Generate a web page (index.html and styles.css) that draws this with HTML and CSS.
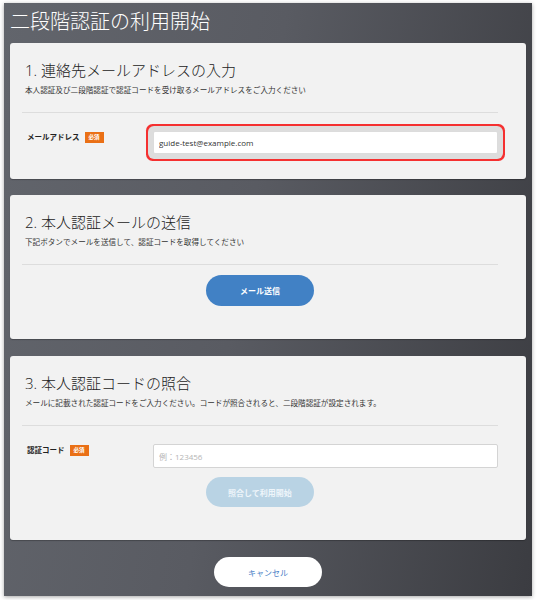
FILE: index.html
```html
<!DOCTYPE html>
<html lang="ja">
<head>
<meta charset="utf-8">
<title>二段階認証の利用開始</title>
<link rel="stylesheet" href="styles.css">
</head>
<body>
<div class="panel">
  <h1 class="title">二段階認証の利用開始</h1>

  <section class="card card-first">
    <h2 class="card-title">1. 連絡先メールアドレスの入力</h2>
    <p class="card-desc">本人認証及び二段階認証で認証コードを受け取るメールアドレスをご入力ください</p>
    <hr class="sep">
    <div class="form-row">
      <div class="label">メールアドレス<span class="badge">必須</span></div>
      <div class="field"><input class="input input-focus" type="text" value="guide-test@example.com"></div>
    </div>
  </section>

  <section class="card">
    <h2 class="card-title">2. 本人認証メールの送信</h2>
    <p class="card-desc">下記ボタンでメールを送信して、認証コードを取得してください</p>
    <hr class="sep">
    <div class="btn-row btn-row-top"><button class="btn btn-primary">メール送信</button></div>
  </section>

  <section class="card">
    <h2 class="card-title">3. 本人認証コードの照合</h2>
    <p class="card-desc">メールに記載された認証コードをご入力ください。コードが照合されると、二段階認証が設定されます。</p>
    <hr class="sep">
    <div class="form-row">
      <div class="label">認証コード<span class="badge">必須</span></div>
      <div class="field"><input class="input" type="text" placeholder="例：123456"></div>
    </div>
    <div class="btn-row"><button class="btn btn-disabled">照合して利用開始</button></div>
  </section>

  <div class="cancel-row"><button class="btn btn-cancel">キャンセル</button></div>
</div>
</body>
</html>
```

FILE: styles.css
```css
* { box-sizing: border-box; }
html, body { margin: 0; padding: 0; background: #ffffff; }
body {
  font-family: "Open Sans", "Noto Sans CJK JP", sans-serif;
  color: #222;
}
.panel {
  margin: 3px 5px 4px 4px;
  width: 528px;
  height: 593px;
  padding: 0 6px 9px 6px;
  background: linear-gradient(100deg, #62656c 0%, #595b62 45%, #3b3c41 100%);
  box-shadow: 0 1px 4px rgba(0,0,0,0.35);
}
.title {
  margin: 0 0 4px 0;
  height: 36px;
  font-size: 20px;
  line-height: 36px;
  font-weight: 300;
  color: #ffffff;
  font-family: "Noto Sans CJK JP", sans-serif;
  letter-spacing: 0;
}
.card {
  display: flow-root;
  background: #f2f2f2;
  border-radius: 3px;
  padding: 17px 28px 0 12px;
  margin-bottom: 16px;
  box-shadow: 0 1px 1px rgba(0,0,0,0.25);
}
.card + .card { margin-bottom: 17px; }
.card-title {
  margin: 0 0 4px 3px;
  font-size: 15px;
  line-height: 20px;
  font-weight: 300;
  color: #222;
  font-family: "Open Sans", "Noto Sans CJK JP", sans-serif;
}
.card-desc {
  margin: 0 0 0 3px;
  font-size: 7.6px;
  line-height: 12px;
  color: #333;
  font-family: "Noto Sans CJK JP", sans-serif;
}
.sep {
  margin: 16px 0 0 0;
  border: 0;
  height: 1px;
  background: #dddddd;
}
.form-row {
  display: flex;
  align-items: flex-start;
  margin-top: 18px;
}
.card-first .form-row { padding-bottom: 25px; }
.label {
  width: 131px;
  padding-left: 5px;
  font-size: 7.5px;
  line-height: 12px;
  font-weight: 700;
  color: #222;
  display: flex;
  align-items: center;
  font-family: "Noto Sans CJK JP", sans-serif;
}
.badge {
  display: inline-block;
  margin-left: 5px;
  background: #ea7016;
  color: #fff;
  font-size: 5.5px;
  line-height: 11px;
  height: 11px;
  padding: 0 4px;
  font-weight: 700;
}
.field { flex: 1; }
.input {
  display: block;
  width: 100%;
  height: 24px;
  border: 1px solid #d4d4d4;
  border-radius: 2px;
  background: #fff;
  padding: 0 5px;
  font-size: 8px;
  color: #333;
  font-family: "Open Sans", "Noto Sans CJK JP", sans-serif;
  outline: none;
}
.input::placeholder { color: #b5b5b5; }
.input-focus {
  height: 23px;
  box-shadow: 0 0 0 5px #dddddd, 0 0 0 7px #f53030;
  border-color: #dcdcdc;
}
.btn-row {
  display: flex;
  justify-content: center;
  margin-top: 9px;
  padding-bottom: 33px;
}
.btn-row-top { margin-top: 10px; }
.btn {
  width: 108px;
  height: 31px;
  border: 0;
  border-radius: 16px;
  font-size: 8px;
  font-weight: 700;
  font-family: "Noto Sans CJK JP", sans-serif;
  padding: 0;
}
.btn-primary { background: #4181c5; color: #fff; }
.btn-disabled { background: #b9d3e4; color: #eef5fa; height: 30px; }
.btn-cancel { background: #fff; color: #4a7fc6; font-weight: 400; height: 30px; }
.cancel-row { display: flex; justify-content: center; }
```
